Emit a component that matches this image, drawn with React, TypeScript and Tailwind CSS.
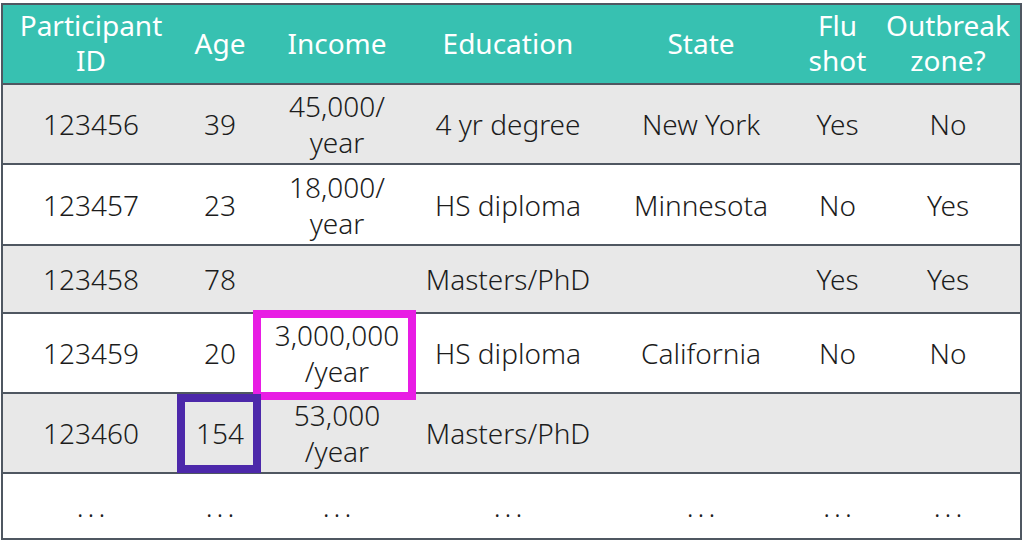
const headers = [
  ["Participant", "ID"],
  ["Age"],
  ["Income"],
  ["Education"],
  ["State"],
  ["Flu", "shot"],
  ["Outbreak", "zone?"],
];

type Row = {
  cells: string[][];
  h: string;
  shade: boolean;
};

const rows: Row[] = [
  { cells: [["123456"], ["39"], ["45,000/", "year"], ["4 yr degree"], ["New York"], ["Yes"], ["No"]], h: "h-[80px]", shade: true },
  { cells: [["123457"], ["23"], ["18,000/", "year"], ["HS diploma"], ["Minnesota"], ["No"], ["Yes"]], h: "h-[81px]", shade: false },
  { cells: [["123458"], ["78"], [], ["Masters/PhD"], [], ["Yes"], ["Yes"]], h: "h-[68px]", shade: true },
  { cells: [["123459"], ["20"], ["3,000,000", "/year"], ["HS diploma"], ["California"], ["No"], ["No"]], h: "h-[80px]", shade: false },
  { cells: [["123460"], ["154"], ["53,000", "/year"], ["Masters/PhD"], [], [], []], h: "h-[80px]", shade: true },
  { cells: [["…"], ["…"], ["…"], ["…"], ["…"], ["…"], ["…"]], h: "h-[66px]", shade: false },
];

const cols = "grid grid-cols-[176px_82px_152px_190px_196px_77px_1fr]";

export default function App() {
  return (
    <div className="w-[1024px] h-[543px] bg-white pt-[3px] pl-[1px] font-['Noto_Sans',sans-serif] font-light">
      <div className="w-[1021px] border-2 border-[#4f5761]">
        {/* Header */}
        <div className={`${cols} h-[78px] bg-[#37c1b1] text-white text-[28px] leading-[35px] font-normal`}>
          {headers.map((lines, i) => (
            <div key={i} className="flex flex-col items-center justify-center text-center pb-[2px]">
              {lines.map((l) => (
                <span key={l}>{l}</span>
              ))}
            </div>
          ))}
        </div>

        {/* Body */}
        {rows.map((row, r) => (
          <div
            key={r}
            className={`${cols} ${row.h} border-t-2 border-[#4f5761] text-[#1c1c1c] text-[28px] leading-[36px] ${
              row.shade ? "bg-[#e8e8e8]" : "bg-white"
            }`}
          >
            {row.cells.map((lines, c) => (
              <div key={c} className="relative flex flex-col items-center justify-center text-center">
                {lines.map((l) => (
                  <span key={l} className={l === "…" ? "tracking-[4px] pl-[4px]" : ""}>{l === "…" ? "..." : l}</span>
                ))}
                {r === 3 && c === 2 && (
                  <div className="absolute -left-[8px] -right-[3px] -top-[4px] -bottom-[8px] border-[8px] border-[#e81de4]" />
                )}
                {r === 4 && c === 1 && (
                  <div className="absolute -left-[2px] right-0 top-0 -bottom-[1px] border-[8px] border-[#4c28aa]" />
                )}
              </div>
            ))}
          </div>
        ))}
      </div>
    </div>
  );
}
